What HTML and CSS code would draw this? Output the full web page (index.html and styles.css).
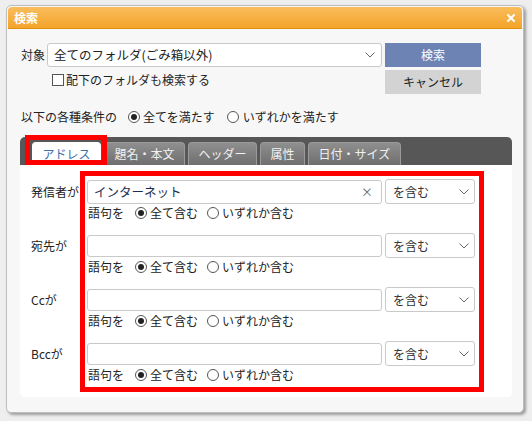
FILE: index.html
```html
<!DOCTYPE html>
<html lang="ja">
<head>
<meta charset="utf-8">
<title>検索</title>
<link rel="stylesheet" href="styles.css">
</head>
<body>
<div class="dialog">
  <div class="titlebar">
    <span class="title">検索</span>
    <svg class="close" width="8" height="8" viewBox="0 0 8 8"><path d="M1 1L7 7M7 1L1 7" stroke="#fff" stroke-width="2" stroke-linecap="square"/></svg>
  </div>
  <div class="body">
    <div class="row-target">
      <span class="lbl-target">対象</span>
      <div class="select select-folder">
        <span>全てのフォルダ(ごみ箱以外)</span>
        <svg class="chev" width="10" height="6" viewBox="0 0 10 6"><path d="M0.5 0.5L5 5L9.5 0.5" fill="none" stroke="#666" stroke-width="1"/></svg>
      </div>
      <button class="btn btn-primary">検索</button>
    </div>
    <div class="row-sub">
      <label class="check"><span class="box"></span>配下のフォルダも検索する</label>
      <button class="btn btn-secondary">キャンセル</button>
    </div>
    <div class="cond">
      <span>以下の各種条件の</span>
      <span class="radio checked cond-r1"></span><span class="rtext">全てを満たす</span>
      <span class="radio cond-r2"></span><span class="rtext">いずれかを満たす</span>
    </div>
    <div class="tabs">
      <div class="tabbar">
        <span class="tab active">アドレス</span>
        <span class="tab">題名・本文</span>
        <span class="tab">ヘッダー</span>
        <span class="tab">属性</span>
        <span class="tab">日付・サイズ</span>
      </div>
      <div class="panel">
        <div class="frow">
          <span class="flabel">発信者が</span>
          <div class="fields">
            <div class="ftop">
              <div class="input input-filled"><span class="val">インターネット</span><span class="clear">×</span></div>
              <div class="select select-op"><span>を含む</span><svg class="chev" width="10" height="6" viewBox="0 0 10 6"><path d="M0.5 0.5L5 5L9.5 0.5" fill="none" stroke="#666" stroke-width="1"/></svg></div>
            </div>
            <div class="fopt"><span>語句を</span><span class="radio checked opt-r1"></span><span class="rtext">全て含む</span><span class="radio opt-r2"></span><span class="rtext">いずれか含む</span></div>
          </div>
        </div>
        <div class="frow">
          <span class="flabel">宛先が</span>
          <div class="fields">
            <div class="ftop">
              <div class="input"></div>
              <div class="select select-op"><span>を含む</span><svg class="chev" width="10" height="6" viewBox="0 0 10 6"><path d="M0.5 0.5L5 5L9.5 0.5" fill="none" stroke="#666" stroke-width="1"/></svg></div>
            </div>
            <div class="fopt"><span>語句を</span><span class="radio checked opt-r1"></span><span class="rtext">全て含む</span><span class="radio opt-r2"></span><span class="rtext">いずれか含む</span></div>
          </div>
        </div>
        <div class="frow">
          <span class="flabel">Ccが</span>
          <div class="fields">
            <div class="ftop">
              <div class="input"></div>
              <div class="select select-op"><span>を含む</span><svg class="chev" width="10" height="6" viewBox="0 0 10 6"><path d="M0.5 0.5L5 5L9.5 0.5" fill="none" stroke="#666" stroke-width="1"/></svg></div>
            </div>
            <div class="fopt"><span>語句を</span><span class="radio checked opt-r1"></span><span class="rtext">全て含む</span><span class="radio opt-r2"></span><span class="rtext">いずれか含む</span></div>
          </div>
        </div>
        <div class="frow">
          <span class="flabel">Bccが</span>
          <div class="fields">
            <div class="ftop">
              <div class="input"></div>
              <div class="select select-op"><span>を含む</span><svg class="chev" width="10" height="6" viewBox="0 0 10 6"><path d="M0.5 0.5L5 5L9.5 0.5" fill="none" stroke="#666" stroke-width="1"/></svg></div>
            </div>
            <div class="fopt"><span>語句を</span><span class="radio checked opt-r1"></span><span class="rtext">全て含む</span><span class="radio opt-r2"></span><span class="rtext">いずれか含む</span></div>
          </div>
        </div>
        <div class="mark-big"></div>
      </div>
      <div class="mark-tab"></div>
    </div>
  </div>
</div>
</body>
</html>
```

FILE: styles.css
```css
* { box-sizing: border-box; }
html, body { margin: 0; padding: 0; }
body {
  background: #eeeeee;
  font-family: "Noto Sans CJK JP", "Noto Sans", sans-serif;
  font-size: 12px;
  color: #222;
  width: 532px;
  height: 421px;
  overflow: hidden;
}
.dialog {
  margin: 5px 0 0 6px;
  width: 518px;
  height: 408px;
  background: #f7f7f7;
  border: 1px solid #bdbdbd;
  border-radius: 5px;
  box-shadow: 2px 2px 3px rgba(0,0,0,0.35);
}
.titlebar {
  margin: 1px 1px 0 1px;
  height: 22px;
  background: linear-gradient(#f9bd5c, #f4a42b);
  border-bottom: 1px solid #e0900f;
  border-radius: 4px 4px 0 0;
  display: flex;
  align-items: center;
  justify-content: space-between;
  padding: 0 6px;
}
.title {
  color: #fff;
  font-weight: bold;
  font-size: 12px;
  line-height: 20px;
}
.close { margin-right: 1px; }
.body {
  padding: 14px 0 0 14px;
}
.row-target {
  display: flex;
  align-items: center;
  height: 24px;
}
.lbl-target { width: 26px; line-height: 24px; }
.select {
  display: flex;
  align-items: center;
  justify-content: space-between;
  background: #fff;
  border: 1px solid #c9c9c9;
  border-radius: 3px;
  line-height: 20px;
}
.select-folder {
  width: 335px;
  height: 24px;
  padding: 0 6px 0 6px;
  font-size: 12.5px;
}
.btn {
  font-family: inherit;
  font-size: 12px;
  border: none;
  margin: 0;
  padding: 0;
  width: 96px;
  height: 24px;
  line-height: 24px;
  text-align: center;
}
.btn-primary {
  margin-left: 3px;
  background: #6d83b4;
  color: #fff;
}
.btn-secondary {
  background: #d3d3d3;
  color: #222;
}
.row-sub {
  display: flex;
  align-items: flex-start;
  margin-top: 3px;
  height: 24px;
}
.check {
  display: flex;
  align-items: center;
  margin-left: 31px;
  width: 333px;
  height: 20px;
  line-height: 20px;
}
.box {
  width: 12px;
  height: 12px;
  border: 1px solid #555;
  background: #fff;
  margin-right: 2px;
  margin-top: -1px;
}
.cond {
  display: flex;
  align-items: center;
  margin-top: 14px;
  height: 18px;
  line-height: 18px;
}
.radio {
  width: 12px;
  height: 12px;
  border: 1px solid #555;
  border-radius: 50%;
  background: #fff;
  position: relative;
  flex: none;
}
.radio.checked::after {
  content: "";
  position: absolute;
  left: 2px;
  top: 2px;
  width: 6px;
  height: 6px;
  border-radius: 50%;
  background: #222;
}
.rtext { margin-left: 3px; }
.cond-r1 { margin-left: 11px; }
.cond-r2 { margin-left: 12px; }
.cond-r2 + .rtext { margin-left: 4px; }
.tabs {
  margin: 11px 0 0 -1px;
  width: 492px;
  height: 260px;
  display: flex;
  flex-direction: column;
  position: relative;
}
.tabbar {
  height: 28px;
  background: #575757;
  border-radius: 5px 5px 0 0;
  padding: 5px 0 0 12px;
  display: flex;
  gap: 3px;
}
.tab {
  height: 23px;
  padding: 0 9.5px;
  border: 1px solid #9a9a9a;
  border-bottom: none;
  border-radius: 4px 4px 0 0;
  background: linear-gradient(#8f8f8f, #6e6e6e);
  color: #f2f2f2;
  line-height: 22px;
  white-space: nowrap;
}
.tab.active {
  background: #fff;
  border-color: #fff;
  color: #3d6fa8;
}
.panel {
  flex: 1;
  background: #fff;
  border-radius: 0 0 5px 5px;
  padding: 14px 0 0 11px;
  position: relative;
}
.frow {
  display: flex;
  margin-bottom: 11px;
}
.flabel {
  width: 56px;
  height: 25px;
  line-height: 25px;
  white-space: nowrap;
}
.fields { width: 388px; }
.ftop {
  display: flex;
  align-items: center;
  gap: 3px;
  height: 25px;
}
.input {
  width: 295px;
  height: 22px;
  border: 1px solid #c9c9c9;
  border-radius: 3px;
  background: #fff;
  display: flex;
  align-items: center;
  justify-content: space-between;
  padding: 0 8px 0 6px;
}
.input-filled { height: 24px; }
.val { color: #1c2d52; font-size: 12.5px; line-height: 20px; }
.clear { color: #666; font-size: 12px; line-height: 20px; }
.select-op {
  width: 90px;
  height: 25px;
  padding: 0 5px 0 7px;
  color: #333;
}
.fopt {
  display: flex;
  align-items: center;
  height: 18px;
  line-height: 18px;
  padding-left: 1px;
}
.opt-r1 { margin-left: 11px; }
.opt-r2 { margin-left: 9px; }
.mark-big {
  position: absolute;
  left: 60px;
  top: 6px;
  width: 404px;
  height: 221px;
  border: 5px solid #ff0000;
}
.mark-tab {
  position: absolute;
  left: 5px;
  top: -2px;
  width: 82px;
  height: 30px;
  border: 5px solid #ff0000;
}
```
